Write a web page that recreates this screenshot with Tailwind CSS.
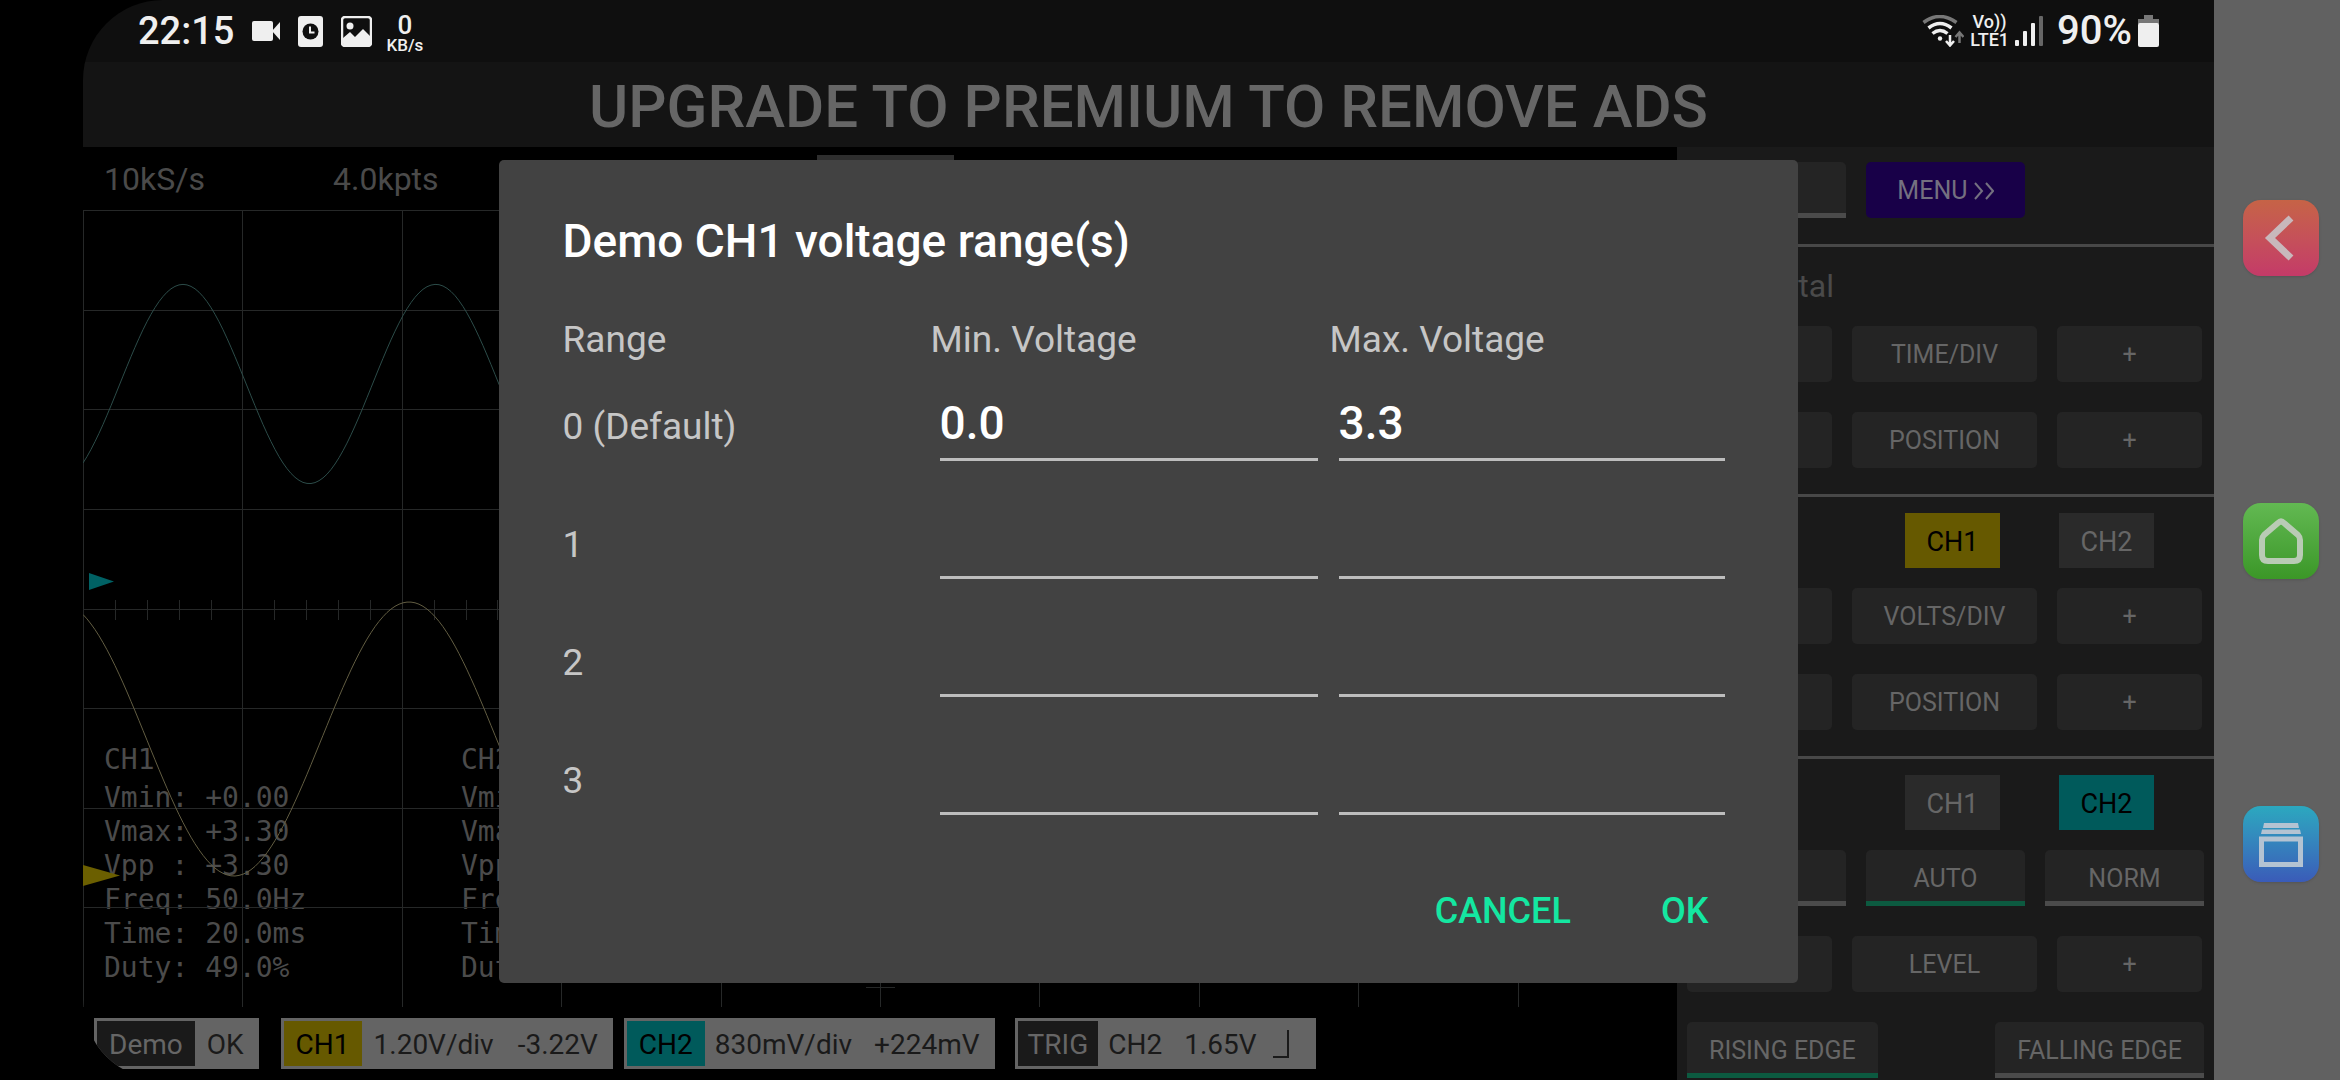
<!DOCTYPE html>
<html lang="en">
<head>
    <meta charset="UTF-8">
    <meta name="viewport" content="width=device-width, initial-scale=1.0">
    <title>Oscilloscope</title>
    <script src="https://cdn.jsdelivr.net/npm/@tailwindcss/browser@4"></script>
</head>
<body class="bg-black font-['Roboto',sans-serif]">
    <div class="flex min-h-screen pl-[83px]">

        <!-- App screen -->
        <div class="relative flex min-w-0 flex-1 flex-col overflow-hidden rounded-l-[80px]">

            <!-- Status bar -->
            <header class="flex h-[62px] shrink-0 items-center justify-between bg-[#0f0f0f] pr-[55px] pl-[55px] text-[#efefef]">
                <div class="flex items-center gap-[18px]">
                    <span class="text-[38px] leading-[44px] font-medium">22:15</span>
                    <svg class="h-5 w-7" viewBox="0 0 28 20" fill="currentColor"><rect width="21" height="20" rx="2"/><path d="M20 10 28 1v18z"/></svg>
                    <svg class="h-[31px] w-[25px]" viewBox="0 0 25 31">
                        <rect width="25" height="31" rx="3" fill="currentColor"/>
                        <circle cx="12.500" cy="15.500" r="8" fill="#0f0f0f"/>
                        <path d="M12 10.500v6h4.500" fill="none" stroke="currentColor" stroke-width="2"/>
                    </svg>
                    <svg class="h-[31px] w-[31px]" viewBox="0 0 31 31">
                        <rect x="1" y="1" width="29" height="29" rx="3" fill="none" stroke="currentColor" stroke-width="2.500"/>
                        <circle cx="9" cy="10" r="3.500" fill="currentColor"/>
                        <path d="M2 22 9 16l5 5 8-8 8 8v6q0 3-3 3H4q-2 0-2-3z" fill="currentColor"/>
                    </svg>
                    <span class="-ml-1 flex flex-col items-center pt-1 font-medium">
                        <span class="text-[26px] leading-6">0</span>
                        <span class="text-[17px] leading-4">KB/s</span>
                    </span>
                </div>
                <div class="flex items-center gap-[6px]">
                    <svg class="h-8 w-[42px]" viewBox="0 0 42 32" fill="none" stroke="currentColor" stroke-width="3.500">
                        <path d="M1.500 7.500q16-12 33 0" stroke="#777"/>
                        <path d="M6.500 13q11.500-9 23 0"/>
                        <path d="M10.500 18.500q7.500-6 15 0"/>
                        <circle cx="18" cy="23.500" r="2.200" fill="currentColor" stroke="none"/>
                        <path d="M28 20v10M24 26l4 4.500 4-4.500" stroke-width="2.500"/>
                        <path d="M37.500 28V18M33.500 22l4-4.500 4 4.500" stroke="#777" stroke-width="2.500"/>
                    </svg>
                    <span class="flex flex-col items-center text-[18px] leading-[18px] font-medium">
                        <span>Vo))</span>
                        <span>LTE1</span>
                    </span>
                    <svg class="h-[30px] w-7" viewBox="0 0 28 30" fill="currentColor">
                        <rect y="24" width="4" height="6" rx="1"/><rect x="8" y="15" width="4" height="15" rx="1"/>
                        <rect x="16" y="7" width="4" height="23" rx="1"/><rect x="24" width="4" height="30" rx="1" fill="#666"/>
                    </svg>
                    <span class="ml-2 text-[40px] leading-[44px] font-medium">90%</span>
                    <svg class="h-8 w-[21px]" viewBox="0 0 21 32">
                        <path d="M6 0h9v4h6v5H0V4h6z" fill="#777"/><rect y="8" width="21" height="24" rx="2" fill="currentColor"/>
                    </svg>
                </div>
            </header>

            <!-- Ad banner -->
            <div class="flex h-[85px] shrink-0 items-center justify-center bg-[#141414] pt-1 text-[60px] leading-[70px] font-medium text-[#666]">UPGRADE TO PREMIUM TO REMOVE ADS</div>

            <div class="flex flex-1">

                <!-- Scope -->
                <main class="flex min-w-0 flex-1 flex-col bg-black pb-[11px]">
                    <div class="flex h-[63px] shrink-0 pl-[21px] text-[32px] leading-[65px] text-[#4a4a4a]">
                        <span class="w-[229px]">10kS/s</span>
                        <span class="w-[484px]">4.0kpts</span>
                        <span class="mt-2 h-10 w-[137px] bg-[#2e2e2e]"></span>
                    </div>

                    <div class="relative flex flex-1 items-end pb-[22px] pl-[21px]">
                        <div class="flex font-['DejaVu_Sans_Mono',monospace] text-[28px] leading-[34px] text-[#4b4b4b]">
                            <div class="w-[357px]">
                                <p class="mb-1">CH1</p>
                                <pre class="font-[inherit]">Vmin: +0.00
Vmax: +3.30
Vpp : +3.30
Freq: 50.0Hz
Time: 20.0ms
Duty: 49.0%</pre>
                            </div>
                            <div>
                                <p class="mb-1">CH2</p>
                                <pre class="font-[inherit]">Vmin:
Vmax:
Vpp :
Freq:
Time:
Duty:</pre>
                            </div>
                        </div>
                        <svg id="plot" class="absolute inset-0 h-full w-full" viewBox="0 0 1594 797" preserveAspectRatio="none" fill="none">
                            <path id="grid" stroke="#262828" shape-rendering="crispEdges"/>
                            <path id="ch2" stroke="#2c4c49"/>
                            <path id="ch1" stroke="#625d42"/>
                            <path d="M6 363 31 371.500 6 380z" fill="#006164"/>
                            <path d="M0 655 37 665.500 0 676z" fill="#6b5f00"/>
                        </svg>
                    </div>

                    <!-- Readouts -->
                    <div class="mt-[11px] flex h-[51px] shrink-0 pl-[11px] text-[28px] leading-[47px] text-[#1a1a1a]">
                        <div class="mr-[22px] flex bg-[#646464] p-[3px]">
                            <span class="bg-[#1a1a1a] px-3 text-[#666]">Demo</span>
                            <span class="px-3">OK</span>
                        </div>
                        <div class="mr-[11px] flex bg-[#646464] p-[3px]">
                            <span class="bg-[#665900] px-3 text-black">CH1</span>
                            <span class="pl-3">1.20V/div</span>
                            <span class="pr-3 pl-6">-3.22V</span>
                        </div>
                        <div class="mr-5 flex bg-[#646464] p-[3px]">
                            <span class="bg-[#005a5b] px-3 text-black">CH2</span>
                            <span class="pl-[10px]">830mV/div</span>
                            <span class="pr-3 pl-[22px]">+224mV</span>
                        </div>
                        <div class="flex bg-[#646464] p-[3px]">
                            <span class="bg-[#1a1a1a] px-[10px] text-[#666]">TRIG</span>
                            <span class="pl-[10px]">CH2</span>
                            <span class="pl-[22px]">1.65V</span>
                            <svg class="mt-2 mr-6 ml-4 h-[30px] w-4" viewBox="0 0 16 30" fill="none" stroke="#1a1a1a" stroke-width="2"><path d="M0 28h15V1"/></svg>
                        </div>
                    </div>
                </main>

                <!-- Controls -->
                <aside class="w-[537px] shrink-0 bg-[#1a1a1a] pt-[15px] text-[25px] leading-[30px] text-[#666]">
                    <div class="grid grid-cols-3 gap-5 px-[10px] pb-[26px]">
                        <button class="h-14 rounded-t-[5px] border-b-5 border-[#4b4b4b] bg-[#242424] pt-[6px]">RUN</button>
                        <button class="h-14 rounded-[5px] bg-[#180048] pt-[2px] text-[#747080]">MENU <svg class="inline h-5 w-5" viewBox="0 0 20 20" fill="none" stroke="currentColor" stroke-width="2"><path d="M1 1 8 9 1 17M12 1l7 8-7 8"/></svg></button>
                    </div>

                    <section class="border-t-3 border-[#484848] px-[10px] pb-[26px]">
                        <h2 class="pt-5 pb-[21px] text-[32px] leading-[38px] text-[#4a4a4a]">Horizontal</h2>
                        <div class="flex gap-5 pr-[2px] pb-[30px]">
                            <button class="h-14 flex-1 rounded-[5px] bg-[#242424] pt-[2px]">-</button>
                            <button class="h-14 w-[185px] rounded-[5px] bg-[#242424] pt-[2px]">TIME/DIV</button>
                            <button class="h-14 flex-1 rounded-[5px] bg-[#242424] pt-[2px]">+</button>
                        </div>
                        <div class="flex gap-5 pr-[2px]">
                            <button class="h-14 flex-1 rounded-[5px] bg-[#242424] pt-[2px]">-</button>
                            <button class="h-14 w-[185px] rounded-[5px] bg-[#242424] pt-[2px]">POSITION</button>
                            <button class="h-14 flex-1 rounded-[5px] bg-[#242424] pt-[2px]">+</button>
                        </div>
                    </section>

                    <section class="border-t-3 border-[#484848] px-[10px] pt-4 pb-[26px]">
                        <div class="flex items-center gap-[59px] pr-[50px] pb-5">
                            <h2 class="flex-1 text-[32px] leading-[38px] text-[#4a4a4a]">Vertical</h2>
                            <button class="h-[55px] w-[95px] bg-[#665900] pt-[2px] text-[27px] text-black">CH1</button>
                            <button class="h-[55px] w-[95px] bg-[#2a2a2a] pt-[2px] text-[27px]">CH2</button>
                        </div>
                        <div class="flex gap-5 pr-[2px] pb-[30px]">
                            <button class="h-14 flex-1 rounded-[5px] bg-[#242424] pt-[2px]">-</button>
                            <button class="h-14 w-[185px] rounded-[5px] bg-[#242424] pt-[2px]">VOLTS/DIV</button>
                            <button class="h-14 flex-1 rounded-[5px] bg-[#242424] pt-[2px]">+</button>
                        </div>
                        <div class="flex gap-5 pr-[2px]">
                            <button class="h-14 flex-1 rounded-[5px] bg-[#242424] pt-[2px]">-</button>
                            <button class="h-14 w-[185px] rounded-[5px] bg-[#242424] pt-[2px]">POSITION</button>
                            <button class="h-14 flex-1 rounded-[5px] bg-[#242424] pt-[2px]">+</button>
                        </div>
                    </section>

                    <section class="border-t-3 border-[#484848] px-[10px] pt-4">
                        <div class="flex items-center gap-[59px] pr-[50px] pb-5">
                            <h2 class="flex-1 text-[32px] leading-[38px] text-[#4a4a4a]">Trigger</h2>
                            <button class="h-[55px] w-[95px] bg-[#2a2a2a] pt-[2px] text-[27px]">CH1</button>
                            <button class="h-[55px] w-[95px] bg-[#005a5b] pt-[2px] text-[27px] text-black">CH2</button>
                        </div>
                        <div class="grid grid-cols-3 gap-5 pb-[30px]">
                            <button class="h-14 rounded-t-[5px] border-b-5 border-[#4b4b4b] bg-[#242424] pt-[6px]">OFF</button>
                            <button class="h-14 rounded-t-[5px] border-b-5 border-[#0c5a40] bg-[#242424] pt-[6px]">AUTO</button>
                            <button class="h-14 rounded-t-[5px] border-b-5 border-[#4b4b4b] bg-[#242424] pt-[6px]">NORM</button>
                        </div>
                        <div class="flex gap-5 pr-[2px] pb-[30px]">
                            <button class="h-14 flex-1 rounded-[5px] bg-[#242424] pt-[2px]">-</button>
                            <button class="h-14 w-[185px] rounded-[5px] bg-[#242424] pt-[2px]">LEVEL</button>
                            <button class="h-14 flex-1 rounded-[5px] bg-[#242424] pt-[2px]">+</button>
                        </div>
                        <div class="flex justify-between">
                            <button class="h-14 rounded-t-[5px] border-b-5 border-[#0c5a40] bg-[#242424] px-[22px] pt-[6px]">RISING EDGE</button>
                            <button class="h-14 rounded-t-[5px] border-b-5 border-[#4b4b4b] bg-[#242424] px-[22px] pt-[6px]">FALLING EDGE</button>
                        </div>
                    </section>
                </aside>
            </div>

            <!-- Voltage range dialog -->
            <div class="absolute inset-x-0 top-[62px] bottom-0 flex items-center justify-center">
                <form role="dialog" aria-labelledby="dialogTitle" onsubmit="return false" class="w-[61%] rounded-[5px] bg-[#424242] px-16 pt-[54px] pb-9 text-[#c6c6c6]">
                    <h1 id="dialogTitle" class="text-[46px] leading-[54px] font-medium text-white">Demo CH1 voltage range(s)</h1>
                    <table class="mt-[51px] w-full table-fixed text-left text-[37px] leading-[42px]">
                        <thead>
                            <tr>
                                <th class="w-[368px] p-0 font-normal">Range</th>
                                <th id="minHead" class="w-[399px] p-0 font-normal">Min. Voltage</th>
                                <th id="maxHead" class="p-0 font-normal">Max. Voltage</th>
                            </tr>
                        </thead>
                        <tbody>
                            <tr>
                                <th id="r0" class="pb-[31px] align-bottom font-normal">0 (Default)</th>
                                <td class="pt-[35px] pr-3 pb-[18px] pl-[9px]"><input type="text" value="0.0" aria-labelledby="minHead r0" class="block h-[65px] w-full border-b-3 border-[#bdbdbd] pb-2 text-[46px] leading-[54px] font-medium text-white outline-none"></td>
                                <td class="pt-[35px] pr-[9px] pb-[18px] pl-[9px]"><input type="text" value="3.3" aria-labelledby="maxHead r0" class="block h-[65px] w-full border-b-3 border-[#bdbdbd] pb-2 text-[46px] leading-[54px] font-medium text-white outline-none"></td>
                            </tr>
                            <tr>
                                <th id="r1" class="pb-[31px] align-bottom font-normal">1</th>
                                <td class="pt-[35px] pr-3 pb-[18px] pl-[9px]"><input type="text" aria-labelledby="minHead r1" class="block h-[65px] w-full border-b-3 border-[#bdbdbd] pb-2 text-[46px] leading-[54px] font-medium text-white outline-none"></td>
                                <td class="pt-[35px] pr-[9px] pb-[18px] pl-[9px]"><input type="text" aria-labelledby="maxHead r1" class="block h-[65px] w-full border-b-3 border-[#bdbdbd] pb-2 text-[46px] leading-[54px] font-medium text-white outline-none"></td>
                            </tr>
                            <tr>
                                <th id="r2" class="pb-[31px] align-bottom font-normal">2</th>
                                <td class="pt-[35px] pr-3 pb-[18px] pl-[9px]"><input type="text" aria-labelledby="minHead r2" class="block h-[65px] w-full border-b-3 border-[#bdbdbd] pb-2 text-[46px] leading-[54px] font-medium text-white outline-none"></td>
                                <td class="pt-[35px] pr-[9px] pb-[18px] pl-[9px]"><input type="text" aria-labelledby="maxHead r2" class="block h-[65px] w-full border-b-3 border-[#bdbdbd] pb-2 text-[46px] leading-[54px] font-medium text-white outline-none"></td>
                            </tr>
                            <tr>
                                <th id="r3" class="pb-[31px] align-bottom font-normal">3</th>
                                <td class="pt-[35px] pr-3 pb-[18px] pl-[9px]"><input type="text" aria-labelledby="minHead r3" class="block h-[65px] w-full border-b-3 border-[#bdbdbd] pb-2 text-[46px] leading-[54px] font-medium text-white outline-none"></td>
                                <td class="pt-[35px] pr-[9px] pb-[18px] pl-[9px]"><input type="text" aria-labelledby="maxHead r3" class="block h-[65px] w-full border-b-3 border-[#bdbdbd] pb-2 text-[46px] leading-[54px] font-medium text-white outline-none"></td>
                            </tr>
                        </tbody>
                    </table>
                    <div class="mt-[42px] flex justify-end gap-[42px] pr-[2px] text-[36px] leading-[42px] font-medium text-[#14e7a1]">
                        <button type="button" class="h-[72px] px-6">CANCEL</button>
                        <button type="submit" class="h-[72px] px-6">OK</button>
                    </div>
                </form>
            </div>
        </div>

        <!-- Navigation buttons -->
        <nav class="flex w-[126px] shrink-0 flex-col items-center justify-center gap-[227px] bg-[#616161] pt-[2px] pl-2">
            <button aria-label="Back" class="h-[76px] w-[76px] rounded-[18px] bg-linear-to-b from-[#c66346] to-[#c43a68] shadow">
                <svg viewBox="0 0 76 76" fill="none" stroke="#c8b8bb" stroke-width="7"><path d="M48 18 27 38 48 58" stroke-linejoin="miter"/></svg>
            </button>
            <button aria-label="Home" class="h-[76px] w-[76px] rounded-[18px] bg-linear-to-b from-[#62b952] to-[#3b9727] shadow">
                <svg viewBox="0 0 76 76" fill="none" stroke="#b9cbb5" stroke-width="6" stroke-linejoin="round"><path d="M35 20q3-3 6 0L55 32q2 2 2 5v15q0 6-6 6H25q-6 0-6-6V37q0-3 2-5z"/></svg>
            </button>
            <button aria-label="Recents" class="h-[76px] w-[76px] rounded-[18px] bg-linear-to-b from-[#2ba8bf] to-[#3a5bb8] shadow">
                <svg viewBox="0 0 76 76" fill="#b4c3d2"><path d="M21 17h34l1 5H20zM19 23.500h38l1 4.500H18z"/><rect x="18.500" y="33" width="39" height="25.500" fill="none" stroke="#b4c3d2" stroke-width="5"/></svg>
            </button>
        </nav>
    </div>

    <script>
        // plot area: 10 x 8 divisions
        const W = 1594, H = 797;
        const dx = W / 10, dy = H / 8;

        function drawGrid() {
            let d = '';
            for (let i = 0; i < 10; i++) d += `M${i * dx + 0.5} 0V${H}`;
            for (let i = 0; i < 8; i++) d += `M0 ${i * dy + 0.5}H${W}`;
            // small ticks on the two centre lines
            for (let i = 1; i < 50; i++) d += `M${i * dx / 5 + 0.5} ${H / 2 - 9}v20`;
            for (let i = 1; i < 40; i++) d += `M${W / 2 - 14} ${i * dy / 5}h29`;
            document.getElementById('grid').setAttribute('d', d);
        }

        function drawWave(id, peak, period, mid, amp) {
            let points = [];
            for (let x = 0; x <= W; x += 4) {
                points.push(`${x} ${(mid - amp * Math.cos((x - peak) / period * 2 * Math.PI)).toFixed(1)}`);
            }
            document.getElementById(id).setAttribute('d', 'M' + points.join('L'));
        }

        drawGrid();
        drawWave('ch2', 100, 252.7, 174, 99.6);
        drawWave('ch1', 326, 350, 529, 137);
    </script>
</body>
</html>
